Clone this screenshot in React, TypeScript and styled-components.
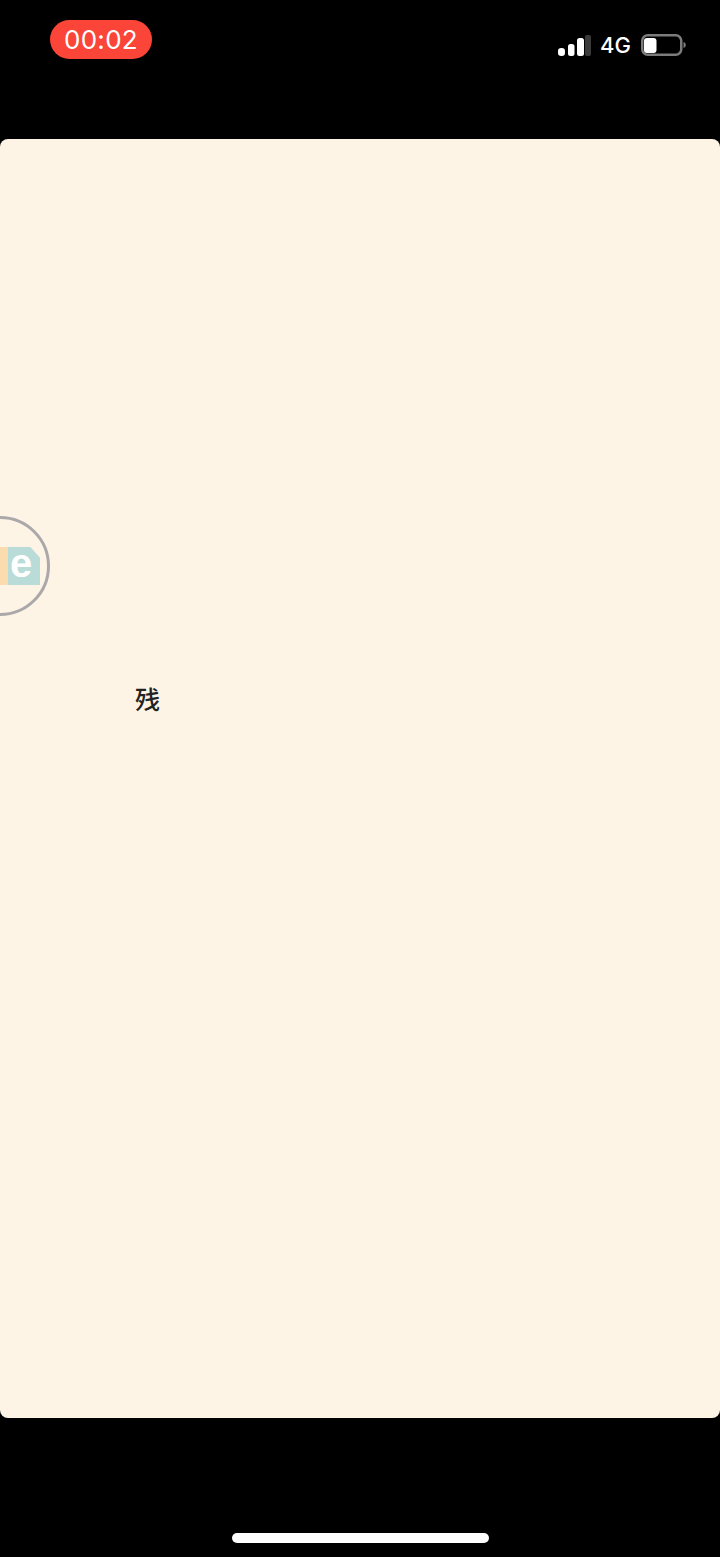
import React from "react";
import styled, { createGlobalStyle } from "styled-components";

const Global = createGlobalStyle`
  html, body { margin: 0; padding: 0; background: #000; }
  #root { width: 720px; height: 1557px; }
`;

const Screen = styled.div`
  width: 720px;
  height: 1557px;
  background: #000;
  display: flex;
  flex-direction: column;
  overflow: hidden;
  font-family: Inter, "Liberation Sans", sans-serif;
`;

const StatusBar = styled.header`
  height: 139px;
  flex: none;
  box-sizing: border-box;
  padding: 20px 33px 0 50px;
  display: flex;
  justify-content: space-between;
  align-items: flex-start;
`;

const TimerPill = styled.div`
  width: 102px;
  height: 39px;
  border-radius: 19.5px;
  background: #fb4539;
  color: #fff;
  font-size: 26px;
  font-weight: 400;
  letter-spacing: 0.3px;
  line-height: 39px;
  text-align: center;
`;

const StatusIcons = styled.div`
  display: flex;
  align-items: center;
  height: 22px;
  margin-top: 14px;
`;

const NetworkLabel = styled.span`
  color: #fff;
  font-size: 22px;
  font-weight: 500;
  line-height: 22px;
  margin: 0 10px 0 9px;
`;

const Panel = styled.main`
  position: relative;
  height: 1279px;
  flex: none;
  box-sizing: border-box;
  background: #fef4e6;
  border-radius: 8px;
  padding: 544px 0 0 135px;
`;

const Glyph = styled.div`
  color: #222;
  font-family: "Noto Sans CJK SC", sans-serif;
  font-size: 25px;
  font-weight: 500;
  line-height: 30px;
`;

const FloatBall = styled.div`
  position: absolute;
  left: -50px;
  top: 377px;
  width: 100px;
  height: 100px;
  box-sizing: border-box;
  border: 3px solid #aaa8a9;
  border-radius: 50%;
`;

const LogoPeach = styled.div`
  position: absolute;
  left: 32px;
  top: 28px;
  width: 26px;
  height: 38px;
  background: #fbdcae;
`;

const LogoTeal = styled.div`
  position: absolute;
  left: 55px;
  top: 28px;
  width: 32px;
  height: 38px;
  background: #b9dcd8;
  clip-path: polygon(0 0, 70% 0, 100% 28%, 100% 100%, 0 100%);
`;

const LogoLetter = styled.span`
  position: absolute;
  left: 53px;
  top: 24px;
  width: 30px;
  text-align: center;
  color: #fff;
  font-family: "Liberation Sans", sans-serif;
  font-weight: 700;
  font-size: 40px;
  line-height: 40px;
`;

const BottomBar = styled.footer`
  flex: 1;
  display: flex;
  justify-content: center;
  padding-top: 115px;
`;

const HomeIndicator = styled.div`
  width: 257px;
  height: 10px;
  border-radius: 5px;
  background: #fff;
`;

const SignalIcon = () => (
  <svg width="33" height="22" viewBox="0 0 33 22">
    <rect x="0" y="14" width="7" height="8" rx="3.2" fill="#fff" />
    <rect x="10" y="10" width="6.5" height="12" rx="2.5" fill="#fff" />
    <rect x="19" y="4" width="7" height="18" rx="2.5" fill="#fff" />
    <rect x="27" y="1" width="6" height="21" rx="2" fill="#3a3a3a" />
  </svg>
);

const BatteryIcon = () => (
  <svg width="46" height="22" viewBox="0 0 46 22">
    <rect x="1.25" y="1.25" width="39" height="19.5" rx="5.5" fill="none" stroke="#7c7c7c" strokeWidth="2.5" />
    <rect x="3" y="4" width="12.5" height="15" rx="3" fill="#fff" />
    <path d="M42.5 8 C45.5 8.5 45.5 13.5 42.5 14 Z" fill="#7c7c7c" />
  </svg>
);

export default function App() {
  return (
    <Screen>
      <Global />
      <StatusBar>
        <TimerPill>00:02</TimerPill>
        <StatusIcons>
          <SignalIcon />
          <NetworkLabel>4G</NetworkLabel>
          <BatteryIcon />
        </StatusIcons>
      </StatusBar>
      <Panel>
        <FloatBall>
          <LogoPeach />
          <LogoTeal />
          <LogoLetter>e</LogoLetter>
        </FloatBall>
        <Glyph>残</Glyph>
      </Panel>
      <BottomBar>
        <HomeIndicator />
      </BottomBar>
    </Screen>
  );
}
